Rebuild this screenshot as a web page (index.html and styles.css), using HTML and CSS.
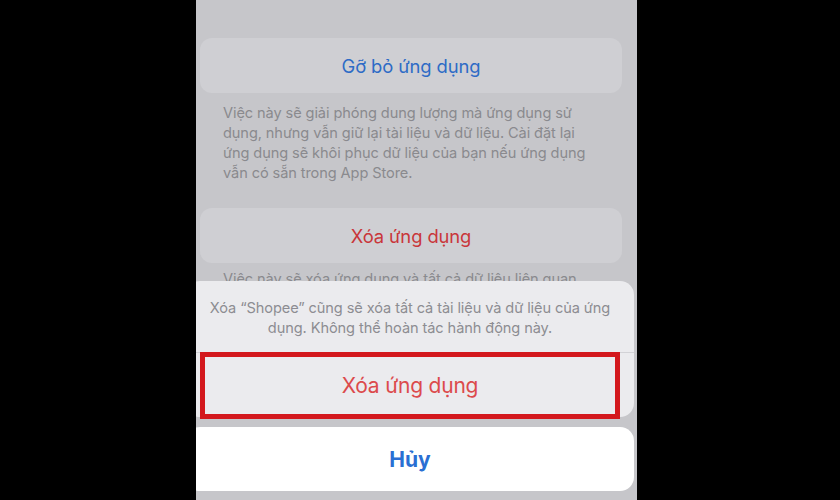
FILE: index.html
```html
<!DOCTYPE html>
<html lang="vi">
<head>
<meta charset="utf-8">
<title>Xóa ứng dụng</title>
<link rel="stylesheet" href="styles.css">
</head>
<body>
<div class="stage">
  <div class="phone">
    <div class="content">
      <div class="card"><span class="card-label blue">Gỡ bỏ ứng dụng</span></div>
      <p class="footer first">Việc này sẽ giải phóng dung lượng mà ứng dụng sử<br>dụng, nhưng vẫn giữ lại tài liệu và dữ liệu. Cài đặt lại<br>ứng dụng sẽ khôi phục dữ liệu của bạn nếu ứng dụng<br>vẫn có sẵn trong App Store.</p>
      <div class="card second"><span class="card-label red">Xóa ứng dụng</span></div>
      <p class="footer second-footer">Việc này sẽ xóa ứng dụng và tất cả dữ liệu liên quan<br>đến ứng dụng này.</p>
    </div>

    <div class="sheet">
      <div class="sheet-group">
        <p class="sheet-message">Xóa “Shopee” cũng sẽ xóa tất cả tài liệu và dữ liệu của ứng<br>dụng. Không thể hoàn tác hành động này.</p>
        <div class="sheet-action destructive">Xóa ứng dụng</div>
      </div>
      <div class="sheet-cancel">Hủy</div>
    </div>

    <div class="highlight"></div>
  </div>
</div>
</body>
</html>
```

FILE: styles.css
```css
html, body {
  margin: 0;
  padding: 0;
  background: #000;
}

body {
  width: 840px;
  height: 500px;
  overflow: hidden;
  font-family: Inter, "Noto Sans", "Liberation Sans", sans-serif;
}

.stage {
  display: flex;
  height: 500px;
  padding-left: 196px;
}

.phone {
  position: relative;
  width: 441px;
  height: 500px;
  background: #c6c6ca;
  overflow: hidden;
}

.content {
  display: flex;
  flex-direction: column;
  padding-top: 38px;
}

.card {
  margin-left: 4px;
  width: 422px;
  height: 55px;
  border-radius: 12px;
  background: #cfcfd3;
  display: flex;
  align-items: center;
  justify-content: center;
}

.card.second {
  margin-top: 25px;
}

.card-label {
  font-size: 18.4px;
  letter-spacing: -0.1px;
}

.blue { color: #2d6bc6; }
.red { color: #c9363a; }

.footer {
  margin: 0;
  padding-left: 27px;
  font-size: 14.6px;
  line-height: 20px;
  color: #8a8a8e;
  letter-spacing: -0.1px;
}

.footer.first {
  margin-top: 10px;
}

/* second footer is hidden behind the action sheet; only its top is visible */
.footer.second-footer {
  margin-top: 6px;
  height: 12px;
  overflow: hidden;
}

.sheet {
  position: absolute;
  top: 281px;
  left: -10px;
  width: 448px;
  display: flex;
  flex-direction: column;
  gap: 10px;
}

.sheet-group {
  background: #ebebee;
  border-radius: 14px;
  overflow: hidden;
}

.sheet-message {
  margin: 0;
  padding: 17px 16px 0;
  height: 54px;
  text-align: center;
  font-size: 14.6px;
  line-height: 20px;
  color: #8d8d92;
  letter-spacing: -0.1px;
  border-bottom: 1px solid #d2d2d6;
}

.sheet-action {
  height: 64px;
  display: flex;
  align-items: center;
  justify-content: center;
  font-size: 21px;
  letter-spacing: -0.2px;
}

.destructive {
  color: #dc4a4c;
}

.sheet-cancel {
  height: 64px;
  background: #fff;
  border-radius: 14px;
  display: flex;
  align-items: center;
  justify-content: center;
  font-size: 21px;
  font-weight: 700;
  color: #2a6fd3;
}

.highlight {
  position: absolute;
  left: 4px;
  top: 352px;
  width: 410px;
  height: 57px;
  border: 5px solid #d3181d;
}
```
